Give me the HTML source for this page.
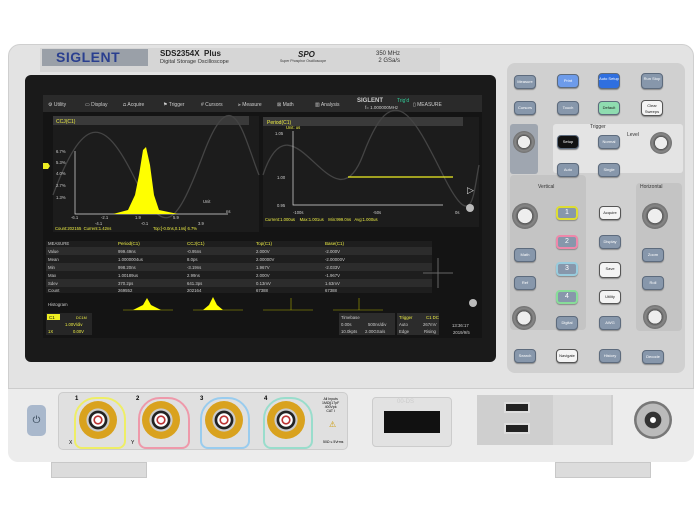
<!DOCTYPE html>
<html><head><style>
*{margin:0;padding:0;box-sizing:border-box}
body{width:700px;height:525px;background:#fff;position:relative;overflow:hidden;font-family:"Liberation Sans",sans-serif}
.a{position:absolute}
.btn{position:absolute;width:22px;height:14px;border-radius:4px;background:#8797ab;border:1px solid #5d6b7d;font-size:4px;color:#fff;text-align:center;line-height:12px;box-shadow:0 1px 1px #888}
.w{background:#f4f4f4;color:#222;border-color:#555}
.knob{position:absolute;border-radius:50%;background:radial-gradient(circle,#eee 0 38%,#555 40%,#888 55%,#444 100%)}
.bnc{position:absolute;width:38px;height:38px;border-radius:50%;background:radial-gradient(circle,#fff 0 10%,#b33 12% 16%,#fff 18% 24%,#222 26% 34%,#ccc 36% 42%,#d9a21e 44% 85%,#9c6f10 88%)}
svg path.ln{fill:none}
</style></head><body>
<div class="a" style="left:8px;top:44px;width:686px;height:418px;border-radius:12px;background:#e3e3e3;border:1px solid #cfcfcf"></div>
<div class="a" style="left:8px;top:388px;width:686px;height:74px;border-radius:0 0 10px 10px;background:#ececec;border-top:1px solid #ccc"></div>
<div class="a" style="left:51px;top:462px;width:96px;height:16px;background:#dcdcdc;border:1px solid #c8c8c8"></div>
<div class="a" style="left:555px;top:462px;width:96px;height:16px;background:#dcdcdc;border:1px solid #c8c8c8"></div>
<div class="a" style="left:40px;top:48px;width:400px;height:24px;background:#d6d6d6"></div>
<div class="a" style="left:42px;top:49px;width:106px;height:17px;background:#9aa0a8;color:#2a3f8f;font-weight:bold;font-size:14px;line-height:17px;padding-left:14px;letter-spacing:0.5px">SIGLENT</div>
<div class="a" style="left:160px;top:49px;font-size:8px;font-weight:bold;color:#222">SDS2354X&nbsp; Plus</div>
<div class="a" style="left:160px;top:59px;font-size:5.5px;color:#333">Digital Storage Oscilloscope</div>
<div class="a" style="left:298px;top:50px;font-size:8px;font-weight:bold;font-style:italic;color:#222">SPO</div>
<div class="a" style="left:280px;top:59px;font-size:3.5px;color:#333">Super Phosphor Oscilloscope</div>
<div class="a" style="left:376px;top:51px;font-size:6px;color:#333;text-align:right;line-height:7px">350 MHz<br>2 GSa/s</div>
<div class="a" style="left:25px;top:75px;width:471px;height:287px;border-radius:6px;background:#1a1a1a"></div>
<div class="a" style="left:43px;top:95px;width:439px;height:243px;background:#141414;overflow:hidden">
<svg width="439" height="243" style="position:absolute;left:0;top:0">
<rect x="0" y="0" width="439" height="17" fill="#2a2a2a"/>
<g fill="#ccc" font-size="5" font-family="Liberation Sans">
<text x="5" y="11">⚙ Utility</text><text x="42" y="11">▭ Display</text><text x="80" y="11">⩍ Acquire</text><text x="120" y="11">⚑ Trigger</text><text x="158" y="11"># Cursors</text><text x="195" y="11">⫸ Measure</text><text x="234" y="11">⊠ Math</text><text x="272" y="11">▥ Analysis</text><text x="370" y="11">▯ MEASURE</text>
<text x="314" y="7" font-weight="bold" font-size="6">SIGLENT</text><text x="322" y="14" font-size="4.5">f= 1.000000MHz</text></g>
<text x="354" y="7" fill="#3c9" font-size="5">Trig'd</text>
<rect x="10" y="21" width="206" height="116" fill="#1c1c1c"/>
<rect x="10" y="21" width="196" height="9" fill="#3a3a3a"/>
<text x="13" y="28" fill="#ee4" font-size="5">CCJ(C1)</text>
<path class="ln" d="M10 100 C40 20,60 20,90 80 S130 140,160 60 S200 40,216 80" stroke="#444" stroke-width="1.3"/>
<path class="ln" d="M32 56 V119 H185" stroke="#ddd" stroke-width="0.7"/>
<path d="M70 119 L85 115 L92 100 L96 80 L100 55 L103 52 L107 70 L111 100 L116 115 L135 119 Z" fill="#ff0"/>
<g fill="#ccc" font-size="4.2"><text x="13" y="58">6.7%</text><text x="13" y="69">5.3%</text><text x="13" y="80">4.0%</text><text x="13" y="92">2.7%</text><text x="13" y="104">1.3%</text>
<text x="28" y="124">-6.1</text><text x="58" y="124">-2.1</text><text x="92" y="124">1.9</text><text x="130" y="124">5.9</text><text x="160" y="108">Unit</text><text x="183" y="118">ns</text>
<text x="52" y="130">-4.1</text><text x="98" y="130">-0.1</text><text x="155" y="130">3.9</text></g>
<text x="12" y="135" fill="#ee4" font-size="4.2">Count:202155&nbsp; Current:1.42ns</text>
<text x="110" y="135" fill="#ee4" font-size="4.2">Top:[-0.0ns,0.1ns] 6.7%</text>
<rect x="220" y="22" width="216" height="110" fill="#1c1c1c"/>
<rect x="220" y="22" width="200" height="9" fill="#3a3a3a"/>
<text x="224" y="29" fill="#ee4" font-size="5">Period(C1)</text>
<path class="ln" d="M220 80 C250 -10,290 140,320 60 S370 20,400 80 S430 100,436 70" stroke="#444" stroke-width="1.3"/>
<path class="ln" d="M250 36 V110 H400" stroke="#ddd" stroke-width="0.7"/>
<path class="ln" d="M305 82 H410" stroke="#ee2" stroke-width="1.2"/>
<g fill="#ccc" font-size="4.2"><text x="232" y="40">1.05</text><text x="234" y="84">1.00</text><text x="234" y="112">0.95</text><text x="250" y="119">-100s</text><text x="330" y="119">-50s</text><text x="412" y="119">0s</text></g>
<text x="243" y="34" fill="#ee4" font-size="4.2">Unit: us</text>
<text x="222" y="126" fill="#ee4" font-size="4.2">Current:1.000us&nbsp;&nbsp;&nbsp; Max:1.001us&nbsp;&nbsp;&nbsp; Min:999.0ns&nbsp;&nbsp; Avg:1.000us</text>
<circle cx="427" cy="113" r="4" fill="#bbb"/>
<text x="424" y="98" fill="#ddd" font-size="9">▷</text>
<path d="M0 68 h5 l2 3 l-2 3 h-5z" fill="#ee2"/>
<rect x="3" y="146" width="386" height="52" fill="#1e1e1e"/>
<g fill="#2c2c2c"><rect x="3" y="152" width="386" height="8"/><rect x="3" y="168" width="386" height="8"/><rect x="3" y="184" width="386" height="8"/></g>
<g fill="#ccc" font-size="4.3"><text x="5" y="150">MEASURE</text><text x="5" y="158">Value</text><text x="5" y="166">Mean</text><text x="5" y="174">Min</text><text x="5" y="182">Max</text><text x="5" y="190">Sdev</text><text x="5" y="197">Count</text><text x="5" y="211">Histogram</text>
<text x="75" y="158">999.49ns</text><text x="75" y="166">1.0000004us</text><text x="75" y="174">998.20ns</text><text x="75" y="182">1.00189us</text><text x="75" y="190">370.2ps</text><text x="75" y="197">269552</text>
<text x="144" y="158">-0.95ns</text><text x="144" y="166">8.0ps</text><text x="144" y="174">-3.19ns</text><text x="144" y="182">2.99ns</text><text x="144" y="190">641.3ps</text><text x="144" y="197">202164</text>
<text x="213" y="158">2.000V</text><text x="213" y="166">2.00000V</text><text x="213" y="174">1.967V</text><text x="213" y="182">2.000V</text><text x="213" y="190">0.13mV</text><text x="213" y="197">67388</text>
<text x="282" y="158">-2.000V</text><text x="282" y="166">-2.00000V</text><text x="282" y="174">-2.033V</text><text x="282" y="182">-1.967V</text><text x="282" y="190">1.63mV</text><text x="282" y="197">67388</text></g>
<g fill="#ee4" font-size="4.5"><text x="75" y="150">Period(C1)</text><text x="144" y="150">CCJ(C1)</text><text x="213" y="150">Top(C1)</text><text x="282" y="150">Base(C1)</text></g>
<path class="ln" d="M380 178 h30 M395 163 v30" stroke="#666" stroke-width="1"/>
<circle cx="430" cy="208" r="4" fill="#bbb"/>
<path class="ln" stroke="#aa0" stroke-width="0.6" d="M80 215 h50 M150 215 h50 M220 215 h50 M290 215 h50 M248 215 v-12 M316 215 v-12"/>
<path d="M90 215 L100 210 L104 203 L108 210 L118 215Z M160 215 L166 210 L170 202 L174 210 L180 215Z" fill="#ff0"/>
<rect x="3" y="218" width="46" height="22" fill="#262626"/>
<rect x="4" y="219" width="13" height="6" fill="#ee2"/><text x="6" y="224" font-size="4.5" fill="#111">C1</text>
<text x="33" y="224" fill="#ee4" font-size="3.8">DC1M</text>
<text x="22" y="231" fill="#ee4" font-size="4.2">1.00V/div</text>
<text x="5" y="238" fill="#ee4" font-size="4.2">1X</text><text x="30" y="238" fill="#ee4" font-size="4.2">0.00V</text>
<rect x="296" y="218" width="56" height="22" fill="#2c2c2c"/><rect x="354" y="218" width="42" height="22" fill="#2c2c2c"/>
<g fill="#ccc" font-size="4.3"><text x="298" y="224">Timebase</text><text x="298" y="231">0.00s</text><text x="325" y="231">500ns/div</text><text x="298" y="238">10.0kpts</text><text x="322" y="238">2.00GSa/s</text>
<text x="356" y="231">Auto</text><text x="380" y="231">267mV</text><text x="356" y="238">Edge</text><text x="381" y="238">Rising</text><text x="409" y="232">13:36:17</text><text x="410" y="239">2019/9/5</text></g>
<g fill="#ee4" font-size="4.3"><text x="356" y="224">Trigger</text><text x="383" y="224">C1 DC</text></g>
</svg></div>
<div class="a" style="left:507px;top:63px;width:178px;height:310px;border-radius:8px;background:#d0d0d0"></div>
<div class="a" style="left:510px;top:175px;width:76px;height:155px;background:#c4c4c4;border-radius:4px"></div>
<div class="a" style="left:636px;top:183px;width:46px;height:148px;background:#c4c4c4;border-radius:4px"></div>
<div class="a" style="left:553px;top:124px;width:130px;height:49px;background:#e4e4e4;border-radius:3px"></div>
<div class="a" style="left:510px;top:124px;width:28px;height:50px;background:#9fa6b0;border-radius:3px"></div>
<div class="knob" style="left:513px;top:131px;width:22px;height:22px"></div>
<div class="knob" style="left:650px;top:132px;width:22px;height:22px"></div>
<div class="knob" style="left:512px;top:203px;width:26px;height:26px"></div>
<div class="knob" style="left:642px;top:203px;width:26px;height:26px"></div>
<div class="knob" style="left:512px;top:306px;width:24px;height:24px"></div>
<div class="knob" style="left:643px;top:305px;width:24px;height:24px"></div>
<div class="a" style="left:590px;top:124px;font-size:5px;color:#333">Trigger</div>
<div class="a" style="left:538px;top:184px;font-size:5px;color:#333">Vertical</div>
<div class="a" style="left:640px;top:184px;font-size:5px;color:#333">Horizontal</div>
<div class="a" style="left:627px;top:132px;font-size:5px;color:#333">Level</div>
<div class="btn" style="left:514px;top:75px">Measure</div>
<div class="btn" style="left:557px;top:74px;background:#6d9bea">Print</div>
<div class="btn" style="left:598px;top:73px;height:16px;background:#2f6fe0;line-height:6px;padding-top:2px">Auto Setup</div>
<div class="btn" style="left:641px;top:73px;height:16px;line-height:6px;padding-top:2px">Run Stop</div>
<div class="btn" style="left:514px;top:101px">Cursors</div>
<div class="btn" style="left:557px;top:101px">Touch</div>
<div class="btn" style="left:598px;top:101px;background:#8fdcb0;color:#222">Default</div>
<div class="btn w" style="left:641px;top:100px;height:16px;line-height:6px;padding-top:2px">Clear Sweeps</div>
<div class="btn" style="left:557px;top:135px;background:#111;color:#fff">Setup</div>
<div class="btn" style="left:598px;top:135px">Normal</div>
<div class="btn" style="left:557px;top:163px">Auto</div>
<div class="btn" style="left:598px;top:163px">Single</div>
<div class="btn" style="left:556px;top:206px;border-color:#dd3;border-width:2px;font-size:7px;line-height:10px">1</div>
<div class="btn" style="left:556px;top:235px;border-color:#e8a;border-width:2px;font-size:7px;line-height:10px">2</div>
<div class="btn" style="left:556px;top:262px;border-color:#9cd;border-width:2px;font-size:7px;line-height:10px">3</div>
<div class="btn" style="left:556px;top:290px;border-color:#8d9;border-width:2px;font-size:7px;line-height:10px">4</div>
<div class="btn" style="left:514px;top:248px">Math</div>
<div class="btn" style="left:514px;top:276px">Ref</div>
<div class="btn" style="left:556px;top:316px">Digital</div>
<div class="btn w" style="left:599px;top:206px">Acquire</div>
<div class="btn" style="left:599px;top:235px">Display</div>
<div class="btn w" style="left:599px;top:262px;height:16px">Save</div>
<div class="btn w" style="left:599px;top:290px">Utility</div>
<div class="btn" style="left:599px;top:316px">AWG</div>
<div class="btn" style="left:642px;top:248px">Zoom</div>
<div class="btn" style="left:642px;top:276px">Roll</div>
<div class="btn" style="left:514px;top:349px">Search</div>
<div class="btn w" style="left:556px;top:349px">Navigate</div>
<div class="btn" style="left:599px;top:349px">History</div>
<div class="btn" style="left:642px;top:350px">Decode</div>
<div class="a" style="left:27px;top:405px;width:19px;height:31px;border-radius:5px;background:#a9b8cc;color:#345;font-size:10px;text-align:center;line-height:31px">⏻</div>
<div class="a" style="left:58px;top:392px;width:290px;height:58px;border-radius:5px;background:#e0e0e0;border:1px solid #ccc"></div>
<div class="a" style="left:74px;top:397px;width:52px;height:52px;border-radius:22px 22px 8px 8px;border:2px solid #ee6"></div>
<div class="a" style="left:138px;top:397px;width:52px;height:52px;border-radius:22px 22px 8px 8px;border:2px solid #e9a"></div>
<div class="a" style="left:200px;top:397px;width:50px;height:52px;border-radius:22px 22px 8px 8px;border:2px solid #9ce"></div>
<div class="a" style="left:263px;top:397px;width:50px;height:52px;border-radius:22px 22px 8px 8px;border:2px solid #9dc"></div>
<div class="bnc" style="left:79px;top:401px"></div>
<div class="bnc" style="left:142px;top:401px"></div>
<div class="bnc" style="left:205px;top:401px"></div>
<div class="bnc" style="left:267px;top:401px"></div>
<div class="a" style="left:75px;top:396px;font-size:6px;font-weight:bold">1</div>
<div class="a" style="left:136px;top:396px;font-size:6px;font-weight:bold">2</div>
<div class="a" style="left:200px;top:396px;font-size:6px;font-weight:bold">3</div>
<div class="a" style="left:264px;top:396px;font-size:6px;font-weight:bold">4</div>
<div class="a" style="left:69px;top:440px;font-size:5px">X</div>
<div class="a" style="left:131px;top:440px;font-size:5px">Y</div>
<div class="a" style="left:322px;top:397px;font-size:3.5px;text-align:center;line-height:4px">All Inputs<br>1MΩ||17pF<br>400Vpk<br>CAT I</div>
<div class="a" style="left:329px;top:420px;font-size:8px;color:#c90">⚠</div>
<div class="a" style="left:323px;top:440px;font-size:3.5px">50Ω ≤ 5Vrms</div>
<div class="a" style="left:372px;top:397px;width:80px;height:50px;border-radius:4px;background:#e2e2e2;border:1px solid #ccc"></div>
<div class="a" style="left:397px;top:399px;font-size:6px;color:#ccc">00-DS</div>
<div class="a" style="left:384px;top:411px;width:56px;height:22px;background:#111"></div>
<div class="a" style="left:477px;top:395px;width:136px;height:50px;background:#cfcfcf"></div>
<div class="a" style="left:553px;top:395px;width:58px;height:50px;background:#dadada"></div>
<div class="a" style="left:504px;top:402px;width:26px;height:11px;background:#222;border:2px solid #ddd"></div>
<div class="a" style="left:504px;top:423px;width:26px;height:11px;background:#222;border:2px solid #ddd"></div>
<div class="a" style="left:634px;top:401px;width:38px;height:38px;border-radius:50%;background:radial-gradient(circle,#fff 0 10%,#333 12% 30%,#bbb 32% 60%,#777 62% 75%,#ddd 78%)"></div>
</body></html>
